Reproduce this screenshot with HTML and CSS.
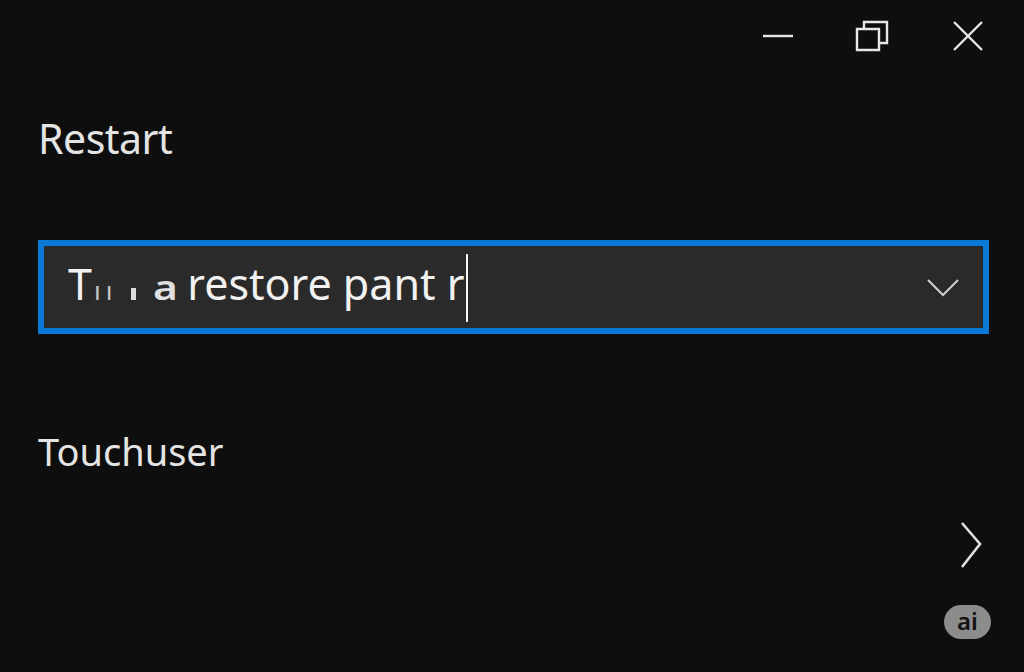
FILE: index.html
```html
<!DOCTYPE html>
<html lang="en">
<head>
<meta charset="utf-8">
<title>Restart</title>
<link rel="stylesheet" href="styles.css">
</head>
<body>
<div class="window">
  <header class="titlebar">
    <button class="ctl" aria-label="Minimize">
      <svg width="32" height="4" viewBox="0 0 32 4"><path d="M1 2H31" stroke="#e8e8e8" stroke-width="2.4"/></svg>
    </button>
    <button class="ctl" aria-label="Restore">
      <svg width="36" height="32" viewBox="0 0 36 32"><path d="M2 9H24V30H2Z M9 9V2H32V23H24" fill="none" stroke="#e8e8e8" stroke-width="2.4"/></svg>
    </button>
    <button class="ctl" aria-label="Close">
      <svg width="32" height="30" viewBox="0 0 32 30"><path d="M2 1L30 29M30 1L2 29" stroke="#e8e8e8" stroke-width="2.4"/></svg>
    </button>
  </header>

  <main class="content">
    <h1 class="heading">Restart</h1>

    <div class="combo">
      <span class="combo-text">T<span class="dim">ıı</span><span class="block"></span><span class="blot">a</span>restore pant r<span class="caret"></span></span>
      <svg class="combo-chevron" width="32" height="18" viewBox="0 0 32 18"><path d="M1 1L16 16L31 1" fill="none" stroke="#d0d0d0" stroke-width="2"/></svg>
    </div>

    <h2 class="subheading">Touchuser</h2>

    <div class="nav-row">
      <svg width="22" height="46" viewBox="0 0 22 46"><path d="M2 1L20 22L2 45" fill="none" stroke="#e0e0e0" stroke-width="2.6"/></svg>
    </div>
  </main>

  <span class="badge">ai</span>
</div>
</body>
</html>
```

FILE: styles.css
```css
html, body {
  margin: 0;
  padding: 0;
  background: #0e0e0e;
}

body {
  font-family: "Noto Sans", "Open Sans", sans-serif;
  color: #e6e6e6;
}

.window {
  position: relative;
  width: 1024px;
  height: 672px;
  overflow: hidden;
  display: flex;
  flex-direction: column;
}

.titlebar {
  display: flex;
  justify-content: flex-end;
  height: 72px;
  padding-right: 9px;
}

.ctl {
  width: 95px;
  height: 72px;
  border: 0;
  background: transparent;
  padding: 0;
  display: flex;
  align-items: center;
  justify-content: center;
}

.content {
  display: flex;
  flex-direction: column;
  padding: 0 35px 0 38px;
}

.heading {
  margin: 46px 0 0;
  font-size: 41px;
  line-height: 41px;
  font-weight: 400;
  letter-spacing: -0.5px;
  color: #e4e4e4;
}

.combo {
  margin-top: 81px;
  height: 82px;
  border: 6px solid #0a78d6;
  background: #2a2a2a;
  display: flex;
  align-items: center;
  justify-content: space-between;
  padding: 0 24px 0 24px;
}

.combo-text {
  display: block;
  font-size: 43px;
  line-height: 82px;
  color: #f2f2f2;
  white-space: pre;
}

/* smeared characters after the leading T */
.dim {
  display: inline-block;
  font-size: 26px;
  letter-spacing: 5px;
  margin-left: 2px;
  color: #c4c4c4;
}

.block {
  display: inline-block;
  width: 5px;
  height: 12px;
  margin-left: 14px;
  background: #dcdcdc;
}

.blot {
  display: inline-block;
  font-size: 34px;
  font-weight: 600;
  margin-left: 17px;
  margin-right: 14px;
  color: #e0e0e0;
  transform: scaleX(1.25);
  transform-origin: left center;
}

.caret {
  display: inline-block;
  width: 2px;
  height: 68px;
  background: #f5f5f5;
  margin-left: 2px;
  vertical-align: middle;
}

.combo-chevron {
  margin-top: 2px;
}

.subheading {
  margin: 98px 0 0;
  font-size: 38px;
  line-height: 38px;
  font-weight: 400;
  color: #e4e4e4;
}

.nav-row {
  display: flex;
  justify-content: flex-end;
  margin-top: 52px;
  padding-right: 7px;
}

.badge {
  position: absolute;
  left: 944px;
  top: 605px;
  width: 47px;
  height: 34px;
  border-radius: 17px;
  background: #8c8c8c;
  color: #111111;
  font-size: 24px;
  font-weight: 600;
  line-height: 32px;
  text-align: center;
}
```
